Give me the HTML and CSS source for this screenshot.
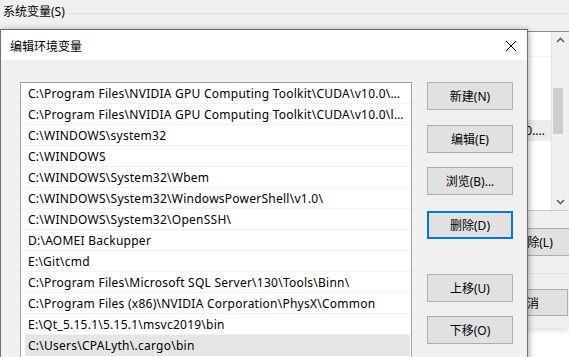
FILE: index.html
```html
<!DOCTYPE html>
<html lang="zh-CN">
<head>
    <meta charset="UTF-8">
    <meta name="viewport" content="width=device-width, initial-scale=1.0">
    <title>编辑环境变量</title>
    <link rel="stylesheet" href="styles.css">
</head>
<body>
    <div class="backdrop">
        <div class="group-head">
            <span class="group-label">系统变量(S)</span>
            <span class="group-line"></span>
        </div>
        <div class="sys-list">
            <div class="sys-rows">
                <div class="sys-header"></div>
                <div class="sys-row selected"><span class="sys-value">0....</span></div>
            </div>
            <div class="scrollbar">
                <svg class="arrow" width="17" height="17" viewBox="0 0 17 17"><polyline points="5,10 8.5,6.5 12,10" fill="none" stroke="#606060" stroke-width="1.6"/></svg>
                <div class="track"><div class="thumb"></div></div>
                <svg class="arrow" width="17" height="17" viewBox="0 0 17 17"><polyline points="5,7 8.5,10.5 12,7" fill="none" stroke="#606060" stroke-width="1.6"/></svg>
            </div>
        </div>
        <div class="sys-actions">
            <button class="btn btn-wide">删除(L)</button>
        </div>
        <div class="sys-separator"></div>
        <div class="sys-footer">
            <button class="btn btn-cancel">取消</button>
        </div>
    </div>

    <div class="dialog">
        <div class="dialog-title">
            <span>编辑环境变量</span>
            <svg class="dialog-close" width="12" height="12" viewBox="0 0 12 12"><path d="M1 1 L11 11 M11 1 L1 11" stroke="#000" stroke-width="1"/></svg>
        </div>
        <div class="dialog-body">
            <div class="path-list"></div>
            <div class="dialog-buttons">
                <button class="btn">新建(N)</button>
                <button class="btn btn-edit">编辑(E)</button>
                <button class="btn btn-browse">浏览(B)...</button>
                <button class="btn btn-delete focused">删除(D)</button>
                <button class="btn btn-up">上移(U)</button>
                <button class="btn btn-down">下移(O)</button>
            </div>
        </div>
    </div>

    <script>
        let paths = [
            "C:\\Program Files\\NVIDIA GPU Computing Toolkit\\CUDA\\v10.0\\bin",
            "C:\\Program Files\\NVIDIA GPU Computing Toolkit\\CUDA\\v10.0\\libnvvp",
            "C:\\WINDOWS\\system32",
            "C:\\WINDOWS",
            "C:\\WINDOWS\\System32\\Wbem",
            "C:\\WINDOWS\\System32\\WindowsPowerShell\\v1.0\\",
            "C:\\WINDOWS\\System32\\OpenSSH\\",
            "D:\\AOMEI Backupper",
            "E:\\Git\\cmd",
            "C:\\Program Files\\Microsoft SQL Server\\130\\Tools\\Binn\\",
            "C:\\Program Files (x86)\\NVIDIA Corporation\\PhysX\\Common",
            "E:\\Qt_5.15.1\\5.15.1\\msvc2019\\bin",
            "C:\\Users\\CPALyth\\.cargo\\bin"
        ];

        let list = document.querySelector(".dialog .path-list");

        paths.map((path, i) => {
            let row = document.createElement("div");
            row.classList.add("path-row");
            if (i == paths.length - 1) row.classList.add("selected");
            let text = document.createElement("span");
            text.classList.add("path-text");
            text.appendChild(document.createTextNode(path));
            row.appendChild(text);
            list.appendChild(row);
        });
    </script>
</body>
</html>
```

FILE: styles.css
```css
*{
    padding: 0;
    margin: 0;
    box-sizing: border-box;
}
body {
    width: 569px;
    height: 357px;
    overflow: hidden;
    position: relative;
    background-color: #ffffff;
    font-family: "Noto Sans", "Noto Sans CJK SC", sans-serif;
    font-size: 12px;
    color: #000;
}
.backdrop {
    display: flex;
    flex-direction: column;
    height: 328px;
    background-color: #f0f0f0;
    box-shadow: 0 2px 6px rgba(0,0,0,.15);
}
.group-head {
    display: flex;
    align-items: center;
    height: 26px;
    padding-left: 3px;
}
.group-label {
    line-height: 16px;
    margin-top: -2px;
}
.group-line {
    flex: 1;
    height: 1px;
    margin-left: 4px;
    background-color: #dcdcdc;
}
.sys-list {
    display: flex;
    height: 180px;
    margin-top: 5px;
    margin-left: 10px;
    border-top: 1px solid #8c8c8c;
    border-bottom: 1px solid #c8c8c8;
    background-color: #fff;
}
.sys-rows {
    flex: 1;
    display: flex;
    flex-direction: column;
    border-right: 1px solid #e2e2e2;
    overflow: hidden;
}
.sys-header {
    height: 25px;
    border-bottom: 1px solid #f2f2f2;
}
.sys-row {
    display: flex;
    height: 21px;
    align-items: center;
    justify-content: flex-end;
}
.sys-row.selected {
    margin-top: 63px;
    padding-right: 6px;
    background-color: #ececec;
}
.scrollbar {
    display: flex;
    flex-direction: column;
    width: 17px;
    flex-shrink: 0;
    background-color: #f0f0f0;
}
.scrollbar .arrow {
    display: block;
    flex-shrink: 0;
}
.scrollbar .track {
    flex: 1;
    padding-top: 39px;
}
.scrollbar .thumb {
    width: 10px;
    height: 46px;
    margin-left: 1px;
    background-color: #cdcdcd;
}
.sys-actions {
    display: flex;
    height: 29px;
    margin-top: 17px;
    padding-left: 491px;
}
.sys-separator {
    height: 1px;
    margin-top: 16px;
    background-color: #dedede;
}
.sys-footer {
    display: flex;
    margin-top: 15px;
    padding-left: 486px;
}
.btn {
    height: 28px;
    border: 1px solid #adadad;
    background-color: #e1e1e1;
    font-family: "Noto Sans", "Noto Sans CJK SC", sans-serif;
    font-size: 12px;
    color: #000;
    flex-shrink: 0;
}
.btn-wide {
    width: 86px;
}
.btn-cancel {
    width: 82px;
    height: 27px;
}
.dialog {
    position: absolute;
    top: 29px;
    left: 0;
    width: 528px;
    height: 360px;
    display: flex;
    flex-direction: column;
    border: 1px solid #6e6e6e;
    background-color: #f0f0f0;
    box-shadow: 1px 1px 6px rgba(0,0,0,.35);
}
.dialog-title {
    display: flex;
    align-items: center;
    justify-content: space-between;
    height: 30px;
    padding: 0 9px 0 9px;
    background-color: #fff;
}
.dialog-title span {
    margin-top: 1px;
}
.dialog-close {
    margin-top: 1px;
    margin-right: 1px;
}
.dialog-body {
    display: flex;
    padding: 22px 0 0 19px;
}
.path-list {
    width: 392px;
    height: 300px;
    border: 1px solid #a0a0a0;
    background-color: #fff;
}
.path-row {
    display: flex;
    align-items: center;
    height: 21px;
    border-bottom: 1px solid #f0f0f0;
    margin-left: 1px;
    padding-left: 6px;
    letter-spacing: 0.25px;
}
.path-row.selected {
    margin-left: 4px;
    margin-right: 1px;
    padding-left: 3px;
    background-color: #e5e5e5;
    border-bottom-color: #e5e5e5;
}
.path-text {
    white-space: nowrap;
    overflow: hidden;
    text-overflow: ellipsis;
    padding-right: 5px;
}
.dialog-buttons {
    display: flex;
    flex-direction: column;
    margin-left: 15px;
}
.dialog-buttons .btn {
    width: 86px;
}
.dialog-buttons .btn-edit {
    margin-top: 15px;
}
.dialog-buttons .btn-browse {
    margin-top: 14px;
}
.dialog-buttons .btn-delete {
    margin-top: 16px;
}
.dialog-buttons .btn-up {
    margin-top: 35px;
}
.dialog-buttons .btn-down {
    margin-top: 14px;
}
.btn.focused {
    border: 2px solid #0078d7;
}
```
